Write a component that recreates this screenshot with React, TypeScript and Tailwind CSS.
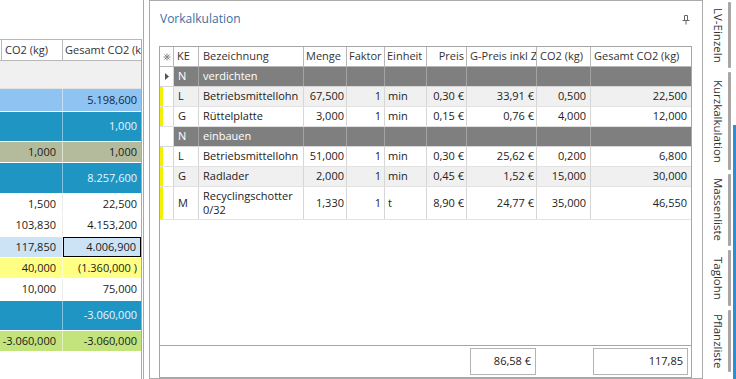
import React from "react";

const FONT = "font-['Open_Sans','Noto_Sans',sans-serif]";
const GRID =
  "grid grid-cols-[14px_25px_105px_43px_38px_42px_40px_70px_54px_100px]";

type LRow = { h: string; bg: string; tc: string; dv: string; a: string; b: string; sel?: boolean };

const leftRows: LRow[] = [
  { h: "h-[23px]", bg: "bg-[#8fc4f2]", tc: "text-[#14263f]", dv: "border-[#c4dff7]", a: "", b: "5.198,600" },
  { h: "h-[30px]", bg: "bg-[#1f95c3]", tc: "text-[#e6f5ff]", dv: "border-[#7fc3e0]", a: "", b: "1,000" },
  { h: "h-[21px]", bg: "bg-[#b3bb9c]", tc: "text-[#1c1c1c]", dv: "border-[#dfe3d3]", a: "1,000", b: "1,000" },
  { h: "h-[31px]", bg: "bg-[#1f95c3]", tc: "text-[#e6f5ff]", dv: "border-[#7fc3e0]", a: "", b: "8.257,600" },
  { h: "h-[21px]", bg: "bg-white", tc: "text-[#1c1c1c]", dv: "border-[#ececec]", a: "1,500", b: "22,500" },
  { h: "h-[22px]", bg: "bg-white", tc: "text-[#1c1c1c]", dv: "border-[#ececec]", a: "103,830", b: "4.153,200" },
  { h: "h-[21px]", bg: "bg-[#cce3f6]", tc: "text-[#1c1c1c]", dv: "border-[#e6f0fa]", a: "117,850", b: "4.006,900", sel: true },
  { h: "h-[21px]", bg: "bg-[#ffff84]", tc: "text-[#1c1c1c]", dv: "border-[#ffffc8]", a: "40,000", b: "(1.360,000 )" },
  { h: "h-[22px]", bg: "bg-white", tc: "text-[#1c1c1c]", dv: "border-[#ececec]", a: "10,000", b: "75,000" },
  { h: "h-[30px]", bg: "bg-[#1f95c3]", tc: "text-[#e6f5ff]", dv: "border-[#7fc3e0]", a: "", b: "-3.060,000" },
  { h: "h-[21px]", bg: "bg-[#c3e37c]", tc: "text-[#1c1c1c]", dv: "border-[#e2f1c0]", a: "-3.060,000", b: "-3.060,000" },
];

function LeftPanel() {
  return (
    <div className="w-[144px] h-full shrink-0 border-r border-[#a9a9a9] bg-white flex flex-col">
      <div className="h-[39px] shrink-0" />
      <div className="w-[142px] flex-1 flex flex-col border-r border-[#a9a9a9]">
        <div className="h-[22px] shrink-0 grid grid-cols-[2px_61px_78px] border-t border-b border-[#b8b8b8] text-[#333] bg-white">
          <div className="border-r border-[#b8b8b8]" />
          <div className="border-r border-[#b8b8b8] pl-[3px] flex items-center whitespace-nowrap overflow-hidden">
            CO2 (kg)
          </div>
          <div className="pl-[2px] flex items-center whitespace-nowrap overflow-hidden">
            Gesamt CO2 (kg)
          </div>
        </div>
        <div className="h-[28px] shrink-0 bg-[#f0f0f0] border-b border-[#e4e4e4]" />
        {leftRows.map((r, i) => (
          <div
            key={i}
            className={`${r.h} ${r.bg} ${r.tc} shrink-0 grid grid-cols-[63px_78px] border-b border-white`}
          >
            <div className={`border-r ${r.dv} flex items-center justify-end pr-[6px] whitespace-nowrap`}>
              {r.a}
            </div>
            <div
              className={`flex items-center justify-end pr-[4px] whitespace-nowrap ${
                r.sel ? "border border-black" : ""
              }`}
            >
              {r.b}
            </div>
          </div>
        ))}
      </div>
    </div>
  );
}

function Asterisk() {
  return (
    <svg width="8" height="8" viewBox="0 0 8 8" className="block">
      <g stroke="#8a8a8a" strokeWidth="1">
        <path d="M4 0.5V7.5M0.5 4H7.5M1.5 1.5L6.5 6.5M6.5 1.5L1.5 6.5" />
      </g>
    </svg>
  );
}

function Triangle() {
  return (
    <svg width="4" height="7" viewBox="0 0 4 7" className="block">
      <path d="M0 0L4 3.5L0 7Z" fill="#555" />
    </svg>
  );
}

function Pin() {
  return (
    <svg width="8" height="10" viewBox="0 0 8 10" className="block">
      <g stroke="#666" strokeWidth="1" fill="none">
        <path d="M2.5 0.5H5.5V5.5M2.5 0.5V5.5" />
        <path d="M0.5 5.5H7.5" />
        <path d="M4 5.5V9.5" />
      </g>
    </svg>
  );
}

type Item = {
  ke: string;
  name: string;
  menge: string;
  faktor: string;
  einheit: string;
  preis: string;
  gpreis: string;
  co2: string;
  gesamt: string;
  bg: string;
  tall?: boolean;
};

const cell = "flex items-center overflow-hidden whitespace-nowrap border-r border-[#d6d6d6]";
const wrapCell = "flex items-center overflow-hidden leading-[14px] border-r border-[#d6d6d6]";
const hcell = "flex items-center overflow-hidden whitespace-nowrap border-r border-[#b8b8b8]";

function HeaderRow() {
  return (
    <div className={`${GRID} h-[20px] shrink-0 bg-white border-b border-[#b8b8b8] text-[#333]`}>
      <div className={`${hcell} justify-center`}>
        <Asterisk />
      </div>
      <div className={`${hcell} pl-[3px]`}>KE</div>
      <div className={`${hcell} pl-[4px]`}>Bezeichnung</div>
      <div className={`${hcell} pl-[2px]`}>Menge</div>
      <div className={`${hcell} pl-[2px]`}>Faktor</div>
      <div className={`${hcell} pl-[2px]`}>Einheit</div>
      <div className={`${hcell} justify-end pr-[2px]`}>Preis</div>
      <div className={`${hcell} pl-[3px]`}>G-Preis inkl Z</div>
      <div className={`${hcell} pl-[3px]`}>CO2 (kg)</div>
      <div className="flex items-center overflow-hidden whitespace-nowrap pl-[3px]">Gesamt CO2 (kg)</div>
    </div>
  );
}

function GroupRow({ name, first }: { name: string; first?: boolean }) {
  const g = "bg-[#7f7f7f] border-r border-[#a3a3a3] flex items-center overflow-hidden whitespace-nowrap";
  return (
    <div className={`${GRID} h-[20px] shrink-0 border-b border-[#d6d6d6] text-white`}>
      <div className="bg-white border-r border-[#d6d6d6] flex items-center pl-[5px]">
        {first ? <Triangle /> : null}
      </div>
      <div className={`${g} pl-[4px]`}>N</div>
      <div className={`${g} pl-[4px]`}>{name}</div>
      <div className={g} />
      <div className={g} />
      <div className={g} />
      <div className={g} />
      <div className={g} />
      <div className={g} />
      <div className="bg-[#7f7f7f]" />
    </div>
  );
}

function ItemRow({ it }: { it: Item }) {
  return (
    <div
      className={`${GRID} ${it.tall ? "h-[33px]" : "h-[20px]"} ${it.bg} shrink-0 border-b border-[#e2e2e2] text-[#222]`}
    >
      <div className="bg-white border-r border-[#d6d6d6] flex">
        <div className="w-[3px] h-full bg-[#f2f200]" />
      </div>
      <div className={`${cell} pl-[4px]`}>{it.ke}</div>
      <div className={`${it.tall ? wrapCell : cell} pl-[4px]`}>{it.name}</div>
      <div className={`${cell} justify-end pr-[2px]`}>{it.menge}</div>
      <div className={`${cell} justify-end pr-[3px]`}>{it.faktor}</div>
      <div className={`${cell} pl-[3px]`}>{it.einheit}</div>
      <div className={`${cell} justify-end pr-[2px]`}>{it.preis}</div>
      <div className={`${cell} justify-end pr-[2px]`}>{it.gpreis}</div>
      <div className={`${cell} justify-end pr-[4px]`}>{it.co2}</div>
      <div className="flex items-center justify-end pr-[4px] whitespace-nowrap">{it.gesamt}</div>
    </div>
  );
}

const group1: Item[] = [
  { ke: "L", name: "Betriebsmittellohn", menge: "67,500", faktor: "1", einheit: "min", preis: "0,30 €", gpreis: "33,91 €", co2: "0,500", gesamt: "22,500", bg: "bg-[#f0f0f0]" },
  { ke: "G", name: "Rüttelplatte", menge: "3,000", faktor: "1", einheit: "min", preis: "0,15 €", gpreis: "0,76 €", co2: "4,000", gesamt: "12,000", bg: "bg-white" },
];
const group2: Item[] = [
  { ke: "L", name: "Betriebsmittellohn", menge: "51,000", faktor: "1", einheit: "min", preis: "0,30 €", gpreis: "25,62 €", co2: "0,200", gesamt: "6,800", bg: "bg-white" },
  { ke: "G", name: "Radlader", menge: "2,000", faktor: "1", einheit: "min", preis: "0,45 €", gpreis: "1,52 €", co2: "15,000", gesamt: "30,000", bg: "bg-[#f0f0f0]" },
  { ke: "M", name: "Recyclingschotter 0/32", menge: "1,330", faktor: "1", einheit: "t", preis: "8,90 €", gpreis: "24,77 €", co2: "35,000", gesamt: "46,550", bg: "bg-white", tall: true },
];

function MiddlePanel() {
  return (
    <div className="w-[554px] h-full shrink-0 border border-[#ababab] bg-white flex flex-col pl-[9px] pr-[10px]">
      <div className="h-[45px] shrink-0 flex justify-between pt-[10px] pl-[1px] pr-[2px]">
        <span className="text-[12px] leading-[16px] text-[#3c6ea5]">Vorkalkulation</span>
        <div className="pt-[4px]">
          <Pin />
        </div>
      </div>
      <div className="w-[533px] h-[332px] shrink-0 border border-[#a6a6a6] flex flex-col">
        <HeaderRow />
        <GroupRow name="verdichten" first />
        {group1.map((it, i) => (
          <ItemRow key={"a" + i} it={it} />
        ))}
        <GroupRow name="einbauen" />
        {group2.map((it, i) => (
          <ItemRow key={"b" + i} it={it} />
        ))}
        <div className="flex-1" />
        <div className={`${GRID} h-[32px] shrink-0 border-t border-[#a6a6a6] text-[#222]`}>
          <div />
          <div />
          <div />
          <div />
          <div />
          <div />
          <div />
          <div className="pl-[3px] pr-[1px] pt-[2px]">
            <div className="h-[27px] border border-[#b4b4b4] flex items-center justify-end pr-[4px] whitespace-nowrap">
              86,58 €
            </div>
          </div>
          <div />
          <div className="pl-[2px] pr-[3px] pt-[2px]">
            <div className="h-[27px] border border-[#b4b4b4] flex items-center justify-end pr-[4px] whitespace-nowrap">
              117,85
            </div>
          </div>
        </div>
      </div>
    </div>
  );
}

const tabs = [
  { t: "LV-Einzeln", h: "h-[66px]", m: "mt-[2px]" },
  { t: "Kurzkalkulation", h: "h-[98px]", m: "mt-[4px]" },
  { t: "Massenliste", h: "h-[72px]", m: "mt-[4px]" },
  { t: "Taglohn", h: "h-[56px]", m: "mt-[4px]" },
  { t: "Pflanzliste", h: "h-[62px]", m: "mt-[4px]" },
];

function Tabs() {
  return (
    <div className="w-[33px] h-full shrink-0 flex bg-white">
      <div className="w-[28px] flex flex-col">
        {tabs.map((t) => (
          <div key={t.t} className={`${t.h} ${t.m} shrink-0 flex`}>
            <div className="w-[25px] flex items-center justify-center pl-[5px]">
              <span className="[writing-mode:vertical-rl] text-[11.5px] leading-[16px] text-[#333] whitespace-nowrap">
                {t.t}
              </span>
            </div>
            <div className="w-[3px] h-full bg-[#aaa6a6] rounded-[1px]" />
          </div>
        ))}
      </div>
      <div className="w-[2px]" />
      <div className="w-[3px] flex flex-col">
        <div className="h-[125px]" />
        <div className="flex-1 bg-[#2a8fd4]" />
      </div>
    </div>
  );
}

export default function App() {
  return (
    <div className={`${FONT} text-[11px] w-[736px] h-[379px] overflow-hidden bg-white flex`}>
      <LeftPanel />
      <div className="w-[5px] shrink-0" />
      <MiddlePanel />
      <Tabs />
    </div>
  );
}
